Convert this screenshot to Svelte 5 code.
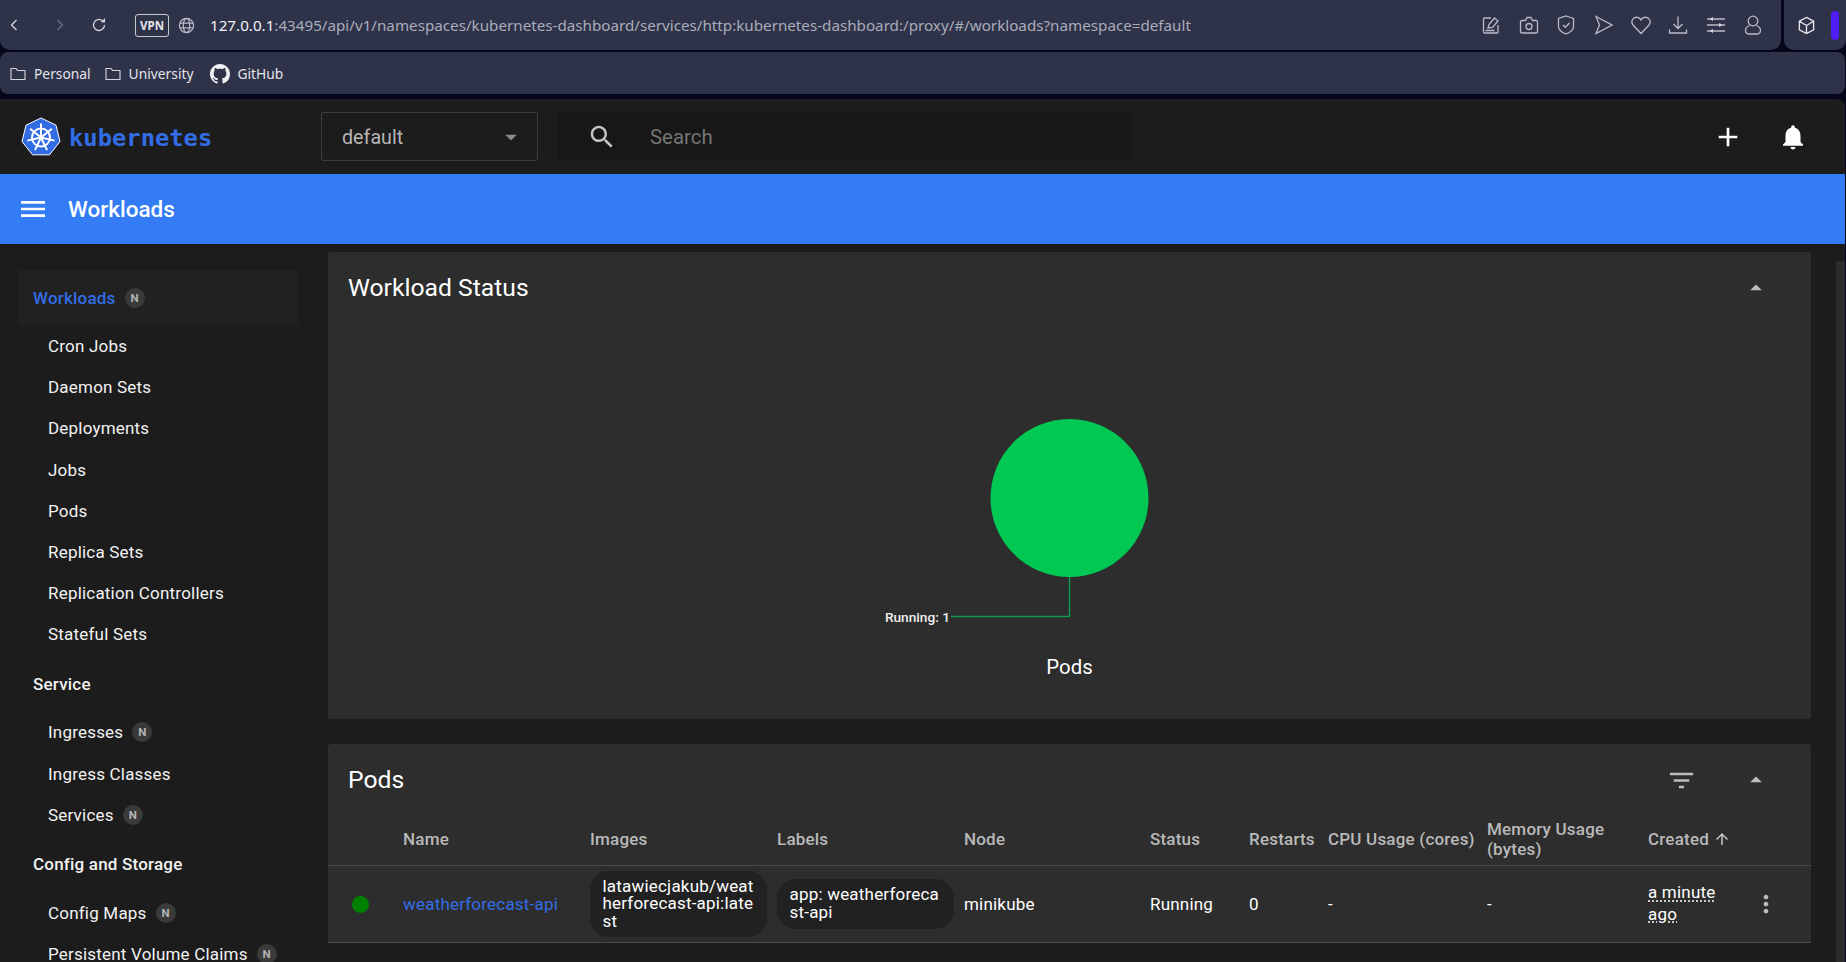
<script>
const groups = [
	{ title: "Workloads", active: true, badge: true, items: [
		{ name: "Cron Jobs" }, { name: "Daemon Sets" }, { name: "Deployments" }, { name: "Jobs" },
		{ name: "Pods" }, { name: "Replica Sets" }, { name: "Replication Controllers" }, { name: "Stateful Sets" }
	]},
	{ title: "Service", items: [
		{ name: "Ingresses", badge: true }, { name: "Ingress Classes" }, { name: "Services", badge: true }
	]},
	{ title: "Config and Storage", items: [
		{ name: "Config Maps", badge: true }, { name: "Persistent Volume Claims", badge: true }
	]}
];

const spokes = [0, 51.4, 102.8, 154.3, 205.7, 257.1, 308.6];
</script>

<div class="app">
	<div class="chrome-row">
		<div class="addr">
			<svg class="nav" viewBox="0 0 12 16"><path d="M9 2 3 8l6 6" /></svg>
			<svg class="nav fwd" viewBox="0 0 12 16"><path d="m3 2 6 6-6 6" /></svg>
			<svg class="reload" viewBox="0 0 16 16"><path d="M13.5 8A5.5 5.5 0 1 1 11.6 3.8" /><path class="solid" d="M9.6 5.2 14 5.4l.2-4.3z" /></svg>
			<span class="vpn">VPN</span>
			<svg class="globe" viewBox="0 0 18 18"><circle cx="9" cy="9" r="7.5" /><ellipse cx="9" cy="9" rx="3.4" ry="7.5" /><path d="M1.8 6.5h14.4M1.8 11.5h14.4" /></svg>
			<span class="url"><b>127.0.0.1</b>:43495/api/v1/namespaces/kubernetes-dashboard/services/http:kubernetes-dashboard:/proxy/#/workloads?namespace=default</span>
			<div class="tools">
				<svg viewBox="0 0 20 20"><path d="M10 3H3.500q-1 0-1 1v13q0 1 1 1h12.500q1 0 1-1v-7" /><path d="m7 13 1-3.500 5.500-6.500 3.500 3-5.500 6.500zM4.500 15.500h9" /></svg>
				<svg viewBox="0 0 20 20"><path d="M3 5.500h3.500l1.500-3h4l1.500 3H17q1.500 0 1.500 1.500v9.500q0 1.500-1.500 1.500H3q-1.500 0-1.500-1.500V7q0-1.500 1.500-1.500z" /><circle cx="10" cy="11.500" r="3" /></svg>
				<svg viewBox="0 0 20 20"><path d="M10 1 17.500 3.500v8q0 4.500-7.500 7.500-7.500-3-7.500-7.500v-8z" /><path d="m7 10 2.300 2.300L13.500 8" /></svg>
				<svg viewBox="0 0 20 20"><path d="m3 1.500 16 8.500-16 8.500 3.500-8.500z" /></svg>
				<svg viewBox="0 0 20 20"><path d="M10 18.500 2 10Q0 7.500 1.500 4.500 3.500 1.500 7 2.500q2 .5 3 2.500 1-2 3-2.500 3.500-1 5.500 2 1.500 3-.5 5.500z" /></svg>
				<svg viewBox="0 0 20 20"><path d="M10 1.500v12M5.500 9 10 13.500 14.500 9M1.500 14.500v3.500h17v-3.500" /></svg>
				<svg viewBox="0 0 20 20"><path d="M1 4h18M1 10h18M1 16h18" /><path class="solid" d="M7 2v4l-3.500-2zM13 8v4l3.500-2zM7 14v4l-3.500-2z" /></svg>
				<svg viewBox="0 0 20 20"><circle cx="10" cy="6" r="4.800" /><path d="M6.500 10.500Q2.500 12 2.500 15.500q0 3.500 4 3.500h7q4 0 4-3.500 0-3.500-4-5" /></svg>
			</div>
		</div>
		<div class="ext">
			<svg viewBox="0 0 20 20"><path d="M10 1.500 17.500 5.500v9L10 18.500l-7.500-4v-9zM2.500 5.500 10 10l7.500-4.500M10 10v8.500" /></svg>
			<span class="sidebar-pill"></span>
		</div>
	</div>

	<div class="bookmarks">
		<span class="mark"><svg class="folder" viewBox="0 0 16 14"><path d="M1 1.500h5l1.500 2H15v9H1z" /></svg>Personal</span>
		<span class="mark"><svg class="folder" viewBox="0 0 16 14"><path d="M1 1.500h5l1.500 2H15v9H1z" /></svg>University</span>
		<span class="mark"><svg class="gh" viewBox="0 0 16 16"><path d="M8 0C3.580 0 0 3.580 0 8c0 3.540 2.290 6.530 5.470 7.590.4.070.55-.17.55-.38 0-.19-.01-.82-.01-1.490-2.010.37-2.530-.49-2.690-.94-.09-.23-.48-.94-.82-1.130-.28-.15-.68-.52-.01-.53.63-.01 1.080.58 1.230.82.72 1.210 1.870.87 2.330.66.070-.52.28-.87.51-1.070-1.780-.2-3.640-.89-3.640-3.950 0-.87.31-1.590.82-2.150-.08-.2-.36-1.020.08-2.120 0 0 .67-.21 2.200.82.64-.18 1.320-.27 2-.27s1.360.09 2 .27c1.530-1.040 2.200-.82 2.200-.82.44 1.100.16 1.920.08 2.120.51.56.82 1.270.82 2.150 0 3.070-1.870 3.750-3.650 3.950.29.25.54.73.54 1.480 0 1.070-.01 1.930-.01 2.200 0 .21.15.46.55.38A8.013 8.013 0 0 0 16 8c0-4.420-3.580-8-8-8z" /></svg>GitHub</span>
	</div>

	<div class="page">
		<header class="top">
			<div class="brand">
				<svg class="logo" viewBox="0 0 40 40">
					<path class="hept" d="M20 1 35 8.200 39 24.500 28.500 37.800H11.500L1 24.500 5 8.200z" />
					<g class="wheel">
						<circle cx="20" cy="20.500" r="9" />
						{#each spokes as a}
							<path d="M20 20.500V6.500" transform="rotate({a} 20 20.500)" />
						{/each}
					</g>
				</svg>
				<span class="wordmark">kubernetes</span>
			</div>
			<div class="select">
				<span>default</span>
				<svg viewBox="0 0 24 24"><path d="M7 10l5 5 5-5z" /></svg>
			</div>
			<div class="search">
				<svg viewBox="0 0 24 24"><path d="M15.500 14h-.79l-.28-.27C15.410 12.590 16 11.110 16 9.500 16 5.910 13.090 3 9.500 3S3 5.910 3 9.500 5.910 16 9.500 16c1.610 0 3.090-.59 4.230-1.570l.27.28v.79l5 4.990L20.490 19l-4.990-5zm-6 0C7.010 14 5 11.990 5 9.500S7.010 5 9.500 5 14 7.010 14 9.500 11.990 14 9.500 14z" /></svg>
				<span>Search</span>
			</div>
			<div class="actions">
				<svg class="plus" viewBox="0 0 24 24"><path d="M19 13h-6v6h-2v-6H5v-2h6V5h2v6h6v2z" /></svg>
				<svg class="bell" viewBox="0 0 24 24"><path d="M12 22c1.100 0 2-.9 2-2h-4c0 1.100.89 2 2 2zm6-6v-5c0-3.070-1.640-5.640-4.500-6.320V4c0-.83-.67-1.500-1.500-1.500s-1.500.67-1.500 1.500v.68C7.630 5.360 6 7.920 6 11v5l-2 2v1h16v-1l-2-2z" /></svg>
			</div>
		</header>

		<div class="bluebar">
			<svg viewBox="0 0 24 24"><path d="M3 18h18v-2H3v2zm0-5h18v-2H3v2zm0-7v2h18V6H3z" /></svg>
			<h1>Workloads</h1>
		</div>

		<div class="main">
			<nav class="side">
				{#each groups as g}
					<div class="group-title" class:active={g.active}>
						{g.title}
						{#if g.badge}<span class="badge">N</span>{/if}
					</div>
					{#each g.items as item}
						<div class="item">
							{item.name}
							{#if item.badge}<span class="badge">N</span>{/if}
						</div>
					{/each}
				{/each}
			</nav>

			<div class="content">
				<section class="card">
					<div class="card-head">
						<h2>Workload Status</h2>
						<svg class="collapse" viewBox="0 0 24 24"><path d="M7 14l5-5 5 5z" /></svg>
					</div>
					<svg class="chart" viewBox="0 0 500 395">
						<circle cx="249.500" cy="174" r="79" fill="#00c853" />
						<path d="M249.500 253V292.500H131" fill="none" stroke="#0e994c" stroke-width="1.500" />
						<text class="chart-label" x="130" y="297.500" text-anchor="end">Running: 1</text>
						<text class="chart-title" x="249.500" y="350" text-anchor="middle">Pods</text>
					</svg>
				</section>

				<section class="card pods">
					<div class="card-head">
						<h2>Pods</h2>
						<svg class="filter" viewBox="0 0 24 24"><path d="M10 18h4v-2h-4v2zM3 6v2h18V6H3zm3 7h12v-2H6v2z" /></svg>
						<svg class="collapse" viewBox="0 0 24 24"><path d="M7 14l5-5 5 5z" /></svg>
					</div>
					<div class="row thead">
						<span></span>
						<span>Name</span>
						<span>Images</span>
						<span>Labels</span>
						<span>Node</span>
						<span>Status</span>
						<span>Restarts</span>
						<span class="nowrap">CPU Usage (cores)</span>
						<span>Memory Usage (bytes)</span>
						<span class="created">Created <svg viewBox="0 0 24 24"><path d="M4 12l1.410 1.410L11 7.830V20h2V7.830l5.580 5.590L20 12l-8-8-8 8z" /></svg></span>
					</div>
					<div class="row tbody">
						<span class="dot"></span>
						<span class="link">weatherforecast-api</span>
						<span class="chip">latawiecjakub/weatherforecast-api:latest</span>
						<span class="chip">app: weatherforecast-api</span>
						<span>minikube</span>
						<span>Running</span>
						<span>0</span>
						<span>-</span>
						<span>-</span>
						<span class="age"><u>a minute</u> <u>ago</u></span>
						<svg class="more" viewBox="0 0 24 24"><path d="M12 8c1.100 0 2-.9 2-2s-.9-2-2-2-2 .9-2 2 .9 2 2 2zm0 2c-1.100 0-2 .9-2 2s.9 2 2 2 2-.9 2-2-.9-2-2-2zm0 6c-1.100 0-2 .9-2 2s.9 2 2 2 2-.9 2-2-.9-2-2-2z" /></svg>
					</div>
				</section>
			</div>

			<div class="scrollbar"></div>
		</div>
	</div>
</div>

<style>
:global(body) {
	margin: 0;
	background: #04061a;
}
.app {
	height: 962px;
	display: flex;
	flex-direction: column;
	overflow: hidden;
	background: #04061a;
	font-family: Roboto, sans-serif;
	color: #fff;
}

/* browser chrome */
.chrome-row {
	display: flex;
	height: 50px;
	gap: 3px;
}
.addr {
	flex: 1;
	display: flex;
	align-items: center;
	background: #2f3349;
	border-radius: 0 0 10px 10px;
	padding-left: 9px;
	min-width: 0;
}
.addr svg {
	fill: none;
	stroke: #d5d7de;
	stroke-width: 1.300;
	flex: none;
}
.addr .solid {
	fill: #d5d7de;
	stroke: none;
}
.nav {
	width: 10px;
	height: 14px;
	stroke-width: 1.600 !important;
}
.nav.fwd {
	margin-left: 36px;
	stroke: #6d7084;
}
.reload {
	width: 16px;
	height: 16px;
	margin-left: 26px;
}
.vpn {
	margin-left: 28px;
	width: 32px;
	height: 21px;
	border: 1px solid #c9cbd3;
	border-radius: 3px;
	font: 700 11.500px "Noto Sans", sans-serif;
	line-height: 21px;
	text-align: center;
	color: #e4e5ea;
}
.globe {
	width: 17px;
	height: 17px;
	margin-left: 9px;
	stroke: #b8bac6 !important;
}
.url {
	margin-left: 15px;
	font: 400 15.200px "Noto Sans", sans-serif;
	color: #a9acb9;
	white-space: nowrap;
}
.url b {
	font-weight: 400;
	color: #f2f3f5;
}
.tools {
	margin-left: auto;
	margin-right: 18px;
	display: flex;
	gap: 17.400px;
}
.tools svg {
	width: 20px;
	height: 20px;
	stroke: #b9bbc6;
}
.ext {
	width: 62px;
	flex: none;
	display: flex;
	align-items: center;
	background: #2f3349;
	border-radius: 0 0 10px 10px;
	padding-left: 13px;
	box-sizing: border-box;
}
.ext svg {
	width: 19px;
	height: 19px;
	fill: none;
	stroke: #e6e7ec;
	stroke-width: 1.400;
}
.sidebar-pill {
	width: 8px;
	height: 29px;
	margin-left: 15px;
	border-radius: 4px;
	background: #4f1df5;
}
.bookmarks {
	margin: 2px 1px 0 0;
	height: 42px;
	flex: none;
	display: flex;
	align-items: center;
	gap: 14px;
	padding: 1px 0 0 10px;
	box-sizing: border-box;
	background: #2f3349;
	border-radius: 8px;
}
.mark {
	display: flex;
	align-items: center;
	font: 400 13.800px "Noto Sans", sans-serif;
	color: #e3e4e9;
}
.folder {
	width: 16px;
	height: 14px;
	margin-right: 8px;
	fill: none;
	stroke: #d5d7de;
	stroke-width: 1.100;
}
.gh {
	width: 20px;
	height: 20px;
	margin: 0 7px 0 3px;
	fill: #f0f1f4;
}

/* dashboard */
.page {
	margin: 5px 1px 0 0;
	flex: 1;
	min-height: 0;
	display: flex;
	flex-direction: column;
	background: #1c1c1c;
	border-radius: 0 8px 0 0;
}
.top {
	height: 75px;
	flex: none;
	display: flex;
	align-items: center;
}
.brand {
	width: 321px;
	display: flex;
	align-items: center;
	padding-left: 21px;
	box-sizing: border-box;
}
.logo {
	width: 40px;
	height: 40px;
}
.hept {
	fill: #326ce5;
	stroke: #fff;
	stroke-width: 1;
}
.wheel {
	fill: none;
	stroke: #fff;
	stroke-width: 2;
}
.wordmark {
	margin: 2px 0 0 8px;
	font: 600 23.800px "DejaVu Sans Mono", monospace;
	color: #326de6;
}
.select {
	width: 217px;
	height: 49px;
	box-sizing: border-box;
	display: flex;
	align-items: center;
	justify-content: space-between;
	padding: 1px 12px 0 20px;
	border: 1px solid #3c3c3c;
	border-radius: 2px;
	font-size: 19.700px;
	color: #b5b5b5;
}
.select svg {
	width: 28px;
	height: 28px;
	fill: #8a8a8a;
}
.search {
	margin-left: 20px;
	width: 574px;
	height: 49px;
	display: flex;
	align-items: center;
	background: #171717;
	border-radius: 2px;
	padding-left: 29px;
	box-sizing: border-box;
	font-size: 20.400px;
	color: #757575;
}
.search svg {
	width: 30px;
	height: 30px;
	fill: #c4c4c4;
	margin-right: 33px;
}
.actions {
	margin-left: auto;
	margin-right: 37px;
	display: flex;
	align-items: center;
	gap: 34px;
}
.actions svg {
	fill: #fff;
}
.plus {
	width: 32px;
	height: 32px;
}
.bell {
	width: 30px;
	height: 30px;
}
.bluebar {
	height: 70px;
	flex: none;
	display: flex;
	align-items: center;
	background: #337cf5;
	padding-left: 17px;
}
.bluebar svg {
	width: 32px;
	height: 32px;
	fill: #fff;
}
.bluebar h1 {
	margin: 0 0 0 19px;
	font-size: 22.500px;
	font-weight: 500;
}
.main {
	flex: 1;
	min-height: 0;
	display: flex;
}

.side {
	width: 328px;
	flex: none;
	padding: 26px 30px 0 18px;
	box-sizing: border-box;
	overflow: hidden;
	font-size: 17px;
	letter-spacing: 0.2px;
}
.group-title {
	height: 56.800px;
	box-sizing: border-box;
	display: flex;
	align-items: center;
	padding: 2px 0 0 15px;
	font-weight: 500;
	color: #f2f2f2;
}
.group-title.active {
	height: 55px;
	padding-top: 0;
	background: #212121;
	color: #326de6;
	border-radius: 2px;
}
.item {
	height: 41.200px;
	box-sizing: border-box;
	display: flex;
	align-items: center;
	padding: 1px 0 0 30px;
	color: #f2f2f2;
	white-space: nowrap;
}
.badge {
	width: 20px;
	height: 20px;
	margin-left: 9px;
	border-radius: 50%;
	background: #3a3a3a;
	color: #b5b5b5;
	font-size: 11.500px;
	font-weight: 700;
	letter-spacing: 0;
	display: flex;
	align-items: center;
	justify-content: center;
}

.content {
	flex: 1;
	min-width: 0;
	padding: 8px 25px 0 0;
	display: flex;
	flex-direction: column;
	gap: 25px;
}
.card {
	background: #2d2d2d;
	border-radius: 3px;
	height: 467px;
	flex: none;
	overflow: hidden;
}
.card.pods {
	height: 199px;
	border-radius: 3px 3px 0 0;
}
.card-head {
	height: 72px;
	box-sizing: border-box;
	display: flex;
	align-items: center;
	padding: 0 41px 0 20px;
}
.card-head h2 {
	margin: 0 0 2px;
	font-size: 24.700px;
	font-weight: 400;
	flex: 1;
}
.collapse {
	width: 28px;
	height: 28px;
	fill: #bdbdbd;
}
.filter {
	width: 31px;
	height: 31px;
	fill: #bdbdbd;
	margin-right: 45px;
}
.chart {
	display: block;
	width: 500px;
	height: 395px;
	margin: 0 auto;
}
.chart-label {
	fill: #ededed;
	font-size: 13.700px;
	font-weight: 500;
}
.chart-title {
	fill: #fff;
	font-size: 20.400px;
}

.row {
	display: grid;
	grid-template-columns: 75px 187px 187px 187px 186px 99px 79px 159px 161px 100px 36px;
	align-items: center;
	font-size: 17px;
	letter-spacing: 0.2px;
}
.thead {
	height: 50px;
	box-sizing: border-box;
	border-bottom: 1px solid #4a4a4a;
	color: #b9b9b9;
	font-weight: 500;
	line-height: 20px;
	padding-bottom: 4px;
}
.thead span {
	padding-right: 4px;
}
.thead .nowrap {
	white-space: nowrap;
	padding-right: 0;
}
.created {
	display: flex;
	align-items: center;
	grid-column: span 2;
	gap: 4px;
}
.created svg {
	width: 18px;
	height: 18px;
	fill: #c9c9c9;
}
.tbody {
	height: 77px;
	box-sizing: border-box;
	border-bottom: 1px solid #4a4a4a;
	color: #fff;
}
.dot {
	width: 17px;
	height: 17px;
	margin-left: 24px;
	border-radius: 50%;
	background: #008000;
}
.link {
	color: #326de6;
}
.chip {
	width: 176.500px;
	box-sizing: border-box;
	padding: 7px 11px 7px 12.500px;
	border-radius: 19px;
	background: #212121;
	line-height: 17.600px;
	word-break: break-all;
}
.age {
	line-height: 21.600px;
	padding-right: 12px;
}
.age u {
	text-decoration: underline dotted;
	text-underline-offset: 2px;
}
.more {
	width: 28px;
	height: 28px;
	fill: #bdbdbd;
	margin-left: 4px;
}
.scrollbar {
	width: 9px;
	flex: none;
	margin-top: 17px;
	background: #2b2b2b;
}
</style>
